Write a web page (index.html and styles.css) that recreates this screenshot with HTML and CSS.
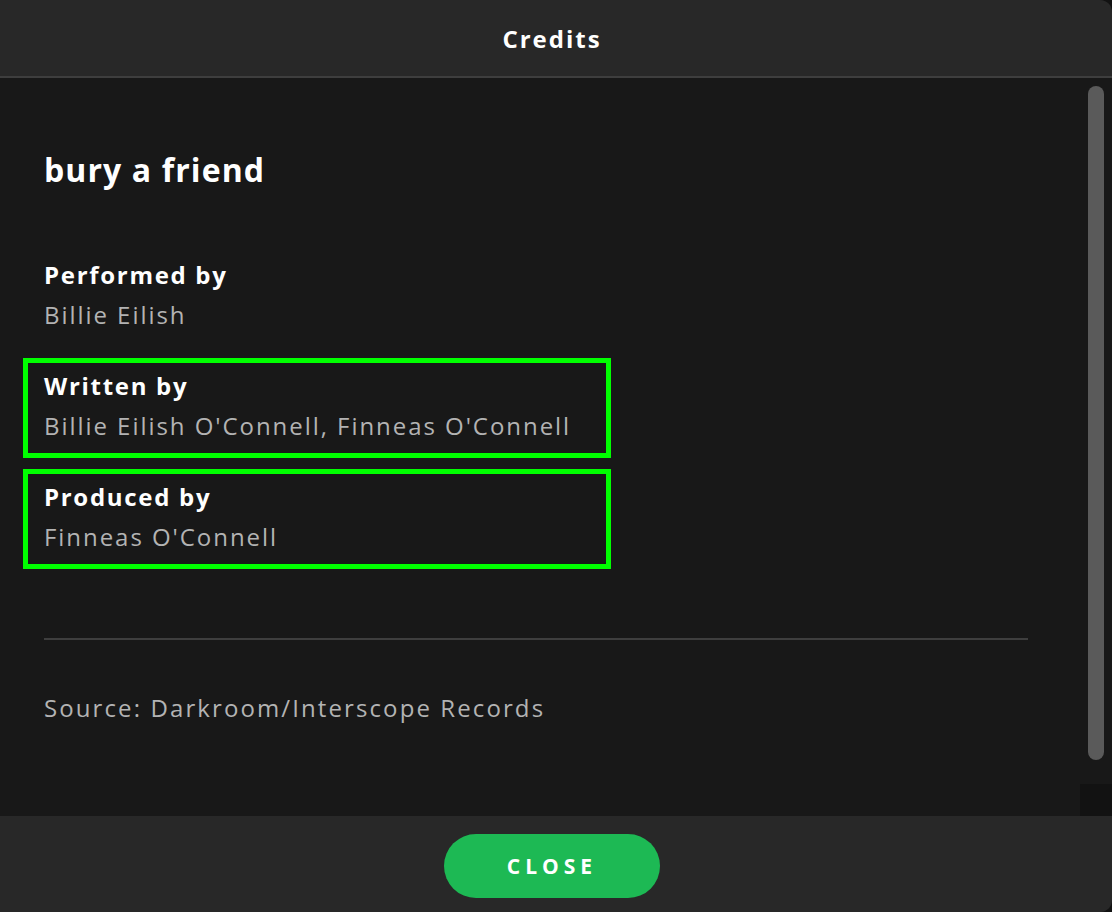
FILE: index.html
```html
<!DOCTYPE html>
<html lang="en">
<head>
    <meta charset="UTF-8">
    <meta name="viewport" content="width=device-width, initial-scale=1.0">
    <title>Credits</title>
    <link rel="stylesheet" href="styles.css">
</head>
<body>

    <div class="dialog">
        <header class="dialog-header">
            <h1>Credits</h1>
        </header>

        <div class="dialog-body">
            <div class="credits">
                <h2 class="track-title">bury a friend</h2>

                <div class="credit-list">
                    <div class="credit-row">
                        <h3>Performed by</h3>
                        <p>Billie Eilish</p>
                    </div>
                    <div class="credit-row highlight">
                        <h3>Written by</h3>
                        <p>Billie Eilish O'Connell, Finneas O'Connell</p>
                    </div>
                    <div class="credit-row highlight">
                        <h3>Produced by</h3>
                        <p>Finneas O'Connell</p>
                    </div>
                </div>

                <hr class="divider">

                <p class="source">Source: Darkroom/Interscope Records</p>
            </div>

            <!-- Barre de défilement -->
            <div class="scrollbar">
                <div class="scroll-thumb"></div>
                <div class="scroll-corner"></div>
            </div>
        </div>

        <footer class="dialog-footer">
            <button class="close-btn">Close</button>
        </footer>
    </div>

</body>
</html>
```

FILE: styles.css
```css
/* Styles généraux */
body {
    font-family: 'Open Sans', 'Noto Sans', sans-serif;
    background-color: #121212;
    color: #ffffff;
    margin: 0;
    padding: 0;
    height: 100vh;
    overflow: hidden;
}

.dialog {
    display: flex;
    flex-direction: column;
    height: 100vh;
    background-color: #181818;
    border-radius: 0 12px 12px 0;
    overflow: hidden;
}

/* En-tête */
.dialog-header {
    height: 76px;
    flex-shrink: 0;
    display: flex;
    justify-content: center;
    align-items: center;
    padding-right: 8px;
    background-color: #282828;
    border-bottom: 2px solid #3e3e3e;
}

.dialog-header h1 {
    margin: 0;
    font-size: 24px;
    font-weight: 700;
    letter-spacing: 2px;
}

/* Contenu */
.dialog-body {
    flex: 1;
    display: flex;
    min-height: 0;
}

.credits {
    flex: 1;
    padding: 72px 52px 0 44px;
}

.track-title {
    margin: 0 0 57px;
    font-size: 32px;
    line-height: 40px;
    font-weight: 700;
    letter-spacing: 1.1px;
}

.credit-list {
    display: flex;
    flex-direction: column;
    gap: 11px;
}

.credit-row {
    box-sizing: border-box;
    width: 588px;
    height: 100px;
    margin-left: -21px;
    padding: 3px 16px 0;
    border: 5px solid transparent;
}

.credit-row.highlight {
    border-color: #00ff00;
}

.credit-row h3 {
    margin: 0;
    font-size: 24px;
    line-height: 40px;
    font-weight: 700;
    letter-spacing: 1.7px;
}

.credit-row p {
    margin: 0;
    font-size: 24px;
    line-height: 40px;
    letter-spacing: 1.95px;
    color: #b3b3b3;
}

.divider {
    margin: 69px 0 0;
    border: none;
    height: 2px;
    background-color: #3e3e3e;
}

.source {
    margin: 48px 0 0;
    font-size: 24px;
    line-height: 40px;
    letter-spacing: 2.1px;
    color: #b3b3b3;
}

/* Barre de défilement */
.scrollbar {
    width: 32px;
    display: flex;
    flex-direction: column;
    justify-content: space-between;
    align-items: center;
}

.scroll-thumb {
    width: 16px;
    height: 674px;
    margin-top: 8px;
    border-radius: 8px;
    background-color: #5a5a5a;
}

.scroll-corner {
    width: 32px;
    height: 32px;
    background-color: #121212;
}

/* Pied de page */
.dialog-footer {
    height: 96px;
    flex-shrink: 0;
    display: flex;
    justify-content: center;
    align-items: center;
    box-sizing: border-box;
    padding: 4px 8px 0 0;
    background-color: #282828;
}

.close-btn {
    width: 216px;
    height: 64px;
    border: none;
    border-radius: 32px;
    background-color: #1db954;
    color: #ffffff;
    font-family: inherit;
    font-size: 21px;
    font-weight: 700;
    letter-spacing: 5px;
    text-transform: uppercase;
    cursor: pointer;
}
```
